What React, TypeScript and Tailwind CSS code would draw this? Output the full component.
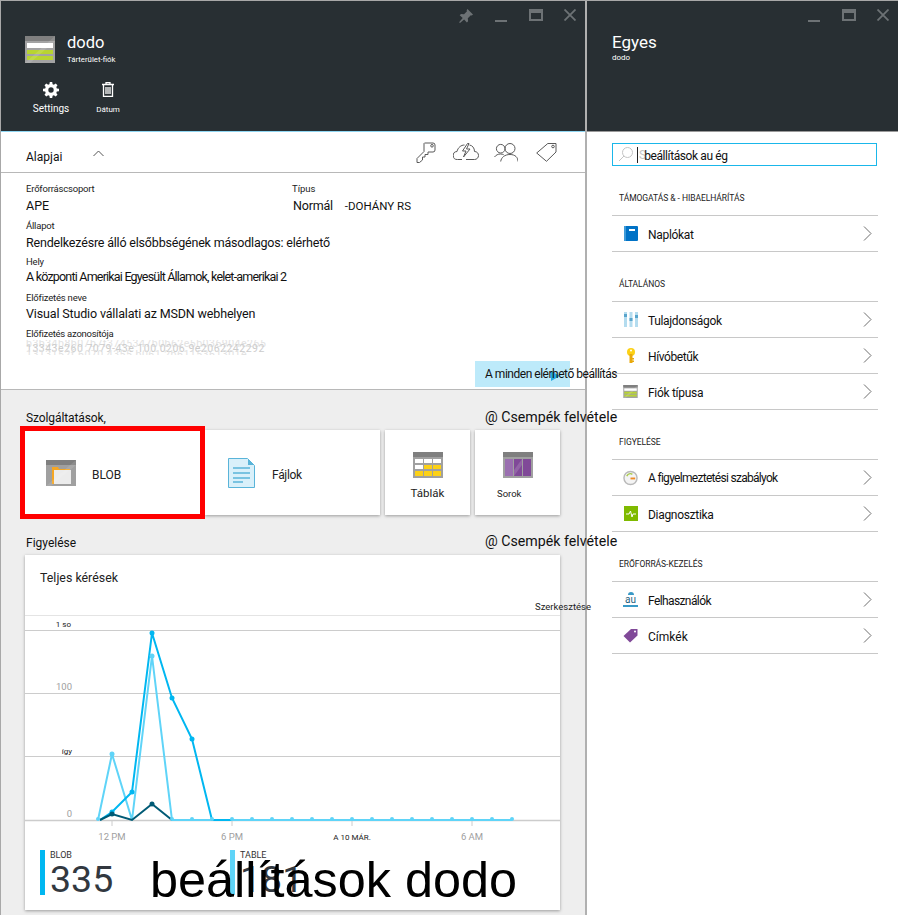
import React from 'react';

const WindowControls: React.FC<{ pin?: boolean }> = ({ pin }) => (
  <div className="flex h-[26px] items-start justify-end pt-[8px]">
    {pin && (
      <svg viewBox="0 0 16 16" className="mr-[21px] mt-[-1px] h-[16px] w-[16px] text-[#6d7275]" fill="currentColor">
        <path d="M9.5 1 15 6.5l-1.2 1-1-.3-3 3 .3 3-1.2 1.2-2.8-3L2 15l-.9-.8 3.6-4.2-3-2.8L3 6l3 .3 3-3-.4-1.1z" />
      </svg>
    )}
    <div className="mr-[22px] mt-[11px] h-[2px] w-[12px] bg-[#6d7275]" />
    <div className="mr-[21px] h-[12px] w-[14px] border-2 border-t-[4px] border-[#6d7275]" />
    <svg viewBox="0 0 12 12" className="mr-[9px] h-[12px] w-[12px] text-[#6d7275]" stroke="currentColor" strokeWidth="1.8">
      <path d="M0.5 0.5 11.5 11.5M11.5 0.5 0.5 11.5" />
    </svg>
  </div>
);

const StorageIcon: React.FC<{ className: string }> = ({ className }) => (
  <svg viewBox="0 0 30 27" className={className}>
    <rect width="30" height="27" fill="#a3a3a3" />
    <rect width="30" height="5" fill="#7f7f7f" />
    <rect x="2" y="7" width="26" height="5" fill="#ffffff" />
    <rect x="2" y="14" width="26" height="4" fill="#b8d432" />
    <rect x="2" y="20" width="26" height="4" fill="#b8d432" />
    <path d="M30 0v5L5 27H0z" fill="#ffffff" fillOpacity="0.12" />
  </svg>
);

const BlobIcon = () => (
  <svg viewBox="0 0 30 26" className="h-[26px] w-[30px]">
    <rect width="30" height="26" fill="#a0a0a0" />
    <rect width="30" height="5" fill="#7f7f7f" />
    <path d="M6 7h6l1 2h11v15H6z" fill="#f5a623" />
    <rect x="8" y="10" width="17" height="14" fill="#ececec" />
    <path d="M30 0v5L5 26H0z" fill="#ffffff" fillOpacity="0.1" />
  </svg>
);

const FileIcon = () => (
  <svg viewBox="0 0 27 30" className="h-[30px] w-[27px]">
    <path d="M0.5 0.5h19l7 7v22h-26z" fill="#d9f0fa" stroke="#59b4d9" />
    <path d="M20 1v6h6z" fill="#59b4d9" />
    <path d="M5 10h17M5 15h17M5 20h17M5 24h10" stroke="#59b4d9" strokeWidth="1.6" />
  </svg>
);

const TableIcon = () => (
  <svg viewBox="0 0 30 26" className="h-[26px] w-[30px]">
    <rect width="30" height="26" fill="#a0a0a0" />
    <rect width="30" height="5" fill="#7f7f7f" />
    <path d="M2 7h8v4H2zM11 7h8v4h-8zM20 7h8v4h-8zM2 13h8v4H2z" fill="#ffffff" />
    <path d="M11 13h8v4h-8zM20 13h8v4h-8zM2 19h8v5H2zM11 19h8v5h-8zM20 19h8v5h-8z" fill="#fcd116" />
  </svg>
);

const QueueIcon = () => (
  <svg viewBox="0 0 30 26" className="h-[26px] w-[30px]">
    <rect width="30" height="26" fill="#a0a0a0" />
    <rect width="30" height="5" fill="#7f7f7f" />
    <rect x="2" y="7" width="8" height="17" fill="#9a6fb0" />
    <rect x="11" y="7" width="8" height="17" fill="#804998" />
    <rect x="20" y="7" width="8" height="17" fill="#804998" />
    <path d="M19 7v6l-8 11v-6z" fill="#ffffff" fillOpacity="0.15" />
  </svg>
);

const BookIcon = () => (
  <svg viewBox="0 0 14 15" className="h-[15px] w-[14px]">
    <rect width="14" height="15" rx="1" fill="#0072c6" />
    <rect x="0" width="2" height="15" fill="#3e9ad8" />
    <rect x="5" y="3" width="6" height="2" fill="#ffffff" />
  </svg>
);

const SlidersIcon = () => (
  <svg viewBox="0 0 14 15" className="h-[15px] w-[14px]">
    <path d="M0 0h3v15H0zM5.5 0h3v15h-3zM11 0h3v15h-3z" fill="#b4dcef" />
    <path d="M0 2h3v3H0zM5.5 6h3v3h-3zM11 3h3v3h-3z" fill="#59a5cc" />
  </svg>
);

const GoldKeyIcon = () => (
  <svg viewBox="0 0 10 15" className="h-[15px] w-[10px]">
    <circle cx="5" cy="4" r="4" fill="#fcd116" />
    <path d="M3.5 6h3v9h-3z" fill="#e8a90c" />
    <path d="M6 10h2v1.5H6zM6 12.500h2V14H6z" fill="#e8a90c" />
    <circle cx="5" cy="2.500" r="1" fill="#ffffff" />
  </svg>
);

const GaugeIcon = () => (
  <svg viewBox="0 0 16 16" className="h-[16px] w-[16px]">
    <circle cx="8" cy="8" r="7" fill="#f4f4f4" stroke="#b9b9b9" strokeWidth="1.500" />
    <path d="M4 6a4.500 4.500 0 0 1 6-2" fill="none" stroke="#a8c94a" strokeWidth="1.500" />
    <path d="M8 8.500h5" stroke="#f08a24" strokeWidth="2" />
  </svg>
);

const DiagIcon = () => (
  <svg viewBox="0 0 14 15" className="h-[15px] w-[14px]">
    <rect width="14" height="15" fill="#7fba00" />
    <path d="M2 8h3l1.500-3 1.500 6 1-3h3" fill="none" stroke="#ffffff" strokeWidth="1" />
  </svg>
);

const UsersAuIcon = () => (
  <div className="flex h-[15px] w-[15px] flex-col items-center">
    <div className="h-[3px] w-[6px] rounded-t-full bg-[#3999c6]" />
    <div className="mt-[1px] text-[10px] leading-[8px] text-[#1f5f80]">au</div>
    <div className="mt-[1px] h-[1.500px] w-[15px] bg-[#3999c6]" />
  </div>
);

const TagIcon = () => (
  <svg viewBox="0 0 15 15" className="h-[15px] w-[15px]">
    <path d="M8 1h6.500v6.500L7 14.500 0.500 8z" fill="#804998" />
    <circle cx="12" cy="3.500" r="1" fill="#ffffff" />
  </svg>
);

const ToolKey = () => (
  <svg viewBox="0 0 20 21" className="h-[21px] w-[20px]" fill="none" stroke="#5a5a5a">
    <path d="M8.500 1H17q2 0 2 2v5q0 2-2 2h-5v2.500H9V15H6.500v3L3.500 20.500H1v-4l7-7V1.500z" />
    <circle cx="16" cy="3.800" r="1.300" />
  </svg>
);

const ToolCloud = () => (
  <svg viewBox="0 0 26 18" className="h-[18px] w-[26px]" fill="none" stroke="#5a5a5a">
    <path d="M9 16.500H4.500a4 4 0 0 1-.5-8C5 4.500 8 2 11.500 2M16.500 2c3 .5 5 3 5 6.500 2.500 0 4 1.800 4 4s-1.700 4-4 4H13" />
    <path d="M14.500 0.500 9.500 8h3.500l-2.500 6 6.500-8h-3.500l2.500-5.500z" />
  </svg>
);

const ToolUsers = () => (
  <svg viewBox="0 0 24 19" className="h-[19px] w-[24px]" fill="none" stroke="#5a5a5a">
    <circle cx="6.700" cy="5.700" r="4.300" />
    <circle cx="16" cy="5.500" r="5" />
    <path d="M0.500 14c1.500-2 3.500-3 6-3 1.200 0 2.300.3 3.200.7M6.700 18.500c.5-4 4-7 9.300-7s8 3 8 7" />
  </svg>
);

const ToolTag = () => (
  <svg viewBox="0 0 21 20" className="h-[20px] w-[21px]" fill="none" stroke="#5a5a5a">
    <path d="M0.700 11 11.800 1.500H20V10L10.500 19.300z" />
    <circle cx="17" cy="4.500" r="1.300" />
  </svg>
);

const Chevron = () => (
  <svg viewBox="0 0 9 15" className="h-[15px] w-[9px]" fill="none" stroke="#6f6f6f">
    <path d="M1 0.500 8 7.500 1 14.500" />
  </svg>
);

const SettingRow: React.FC<{ icon: React.ReactNode; label: string; labelClass: string }> = ({ icon, label, labelClass }) => (
  <div className="flex h-[36px] items-center border-b border-[#c8c8c8] pl-[11px] pr-[6px]">
    <div className="flex w-[15px] justify-center">{icon}</div>
    <div className={`flex-1 pl-[10px] text-[12px] text-[#111111] ${labelClass}`}>{label}</div>
    <Chevron />
  </div>
);

const SectionHead: React.FC<{ label: string }> = ({ label }) => (
  <div className="flex h-[50px] items-end border-b border-[#c8c8c8] pb-[12px] pl-[7px] text-[8.500px] leading-[10px] tracking-[-0.05px] text-[#222222]">
    {label}
  </div>
);

const Field: React.FC<{ label: string; value: string; className: string; valueClass: string }> = ({ label, value, className, valueClass }) => (
  <div className={className}>
    <div className="text-[9.500px] leading-[12px] tracking-[-0.2px] text-[#222222]">{label}</div>
    <div className={`text-[12.500px] text-[#111111] ${valueClass}`}>{value}</div>
  </div>
);

const blobPts = '100,820 112,812 132,792 152,633 172,698 192,739 212,820 232,820';
const tablePts = '98,820 112,754 132,820 152,656 172,820 512,820';
const darkPts = '100,820 112,814 132,820 152,804 172,820';
const zeroDots = [98, 172, 192, 212, 232, 252, 272, 292, 312, 332, 352, 372, 392, 412, 432, 452, 472, 492, 512];

const RequestChart = () => (
  <svg viewBox="25 610 535 235" className="mt-[24px] block h-[235px] w-[535px]">
    <path d="M25 615.500H560" stroke="#e4e4e4" />
    <path d="M25 630.500H560M25 693.500H560M25 756.500H560" stroke="#cccccc" />
    <path d="M25 820.500H560" stroke="#cccccc" strokeWidth="1.500" />
    <path d="M112 821v5M232 821v5M352 821v5M472 821v5" stroke="#cccccc" />
    <polyline points={tablePts} fill="none" stroke="#5fd4f8" strokeWidth="2" />
    <polyline points={blobPts} fill="none" stroke="#00b7f1" strokeWidth="2" />
    <polyline points={darkPts} fill="none" stroke="#005a75" strokeWidth="2" />
    {zeroDots.map((x) => (
      <circle key={x} cx={x} cy="819" r="2" fill="#5fd4f8" />
    ))}
    {[[112, 754], [152, 656]].map(([x, y]) => (
      <circle key={x} cx={x} cy={y} r="2.500" fill="#5fd4f8" />
    ))}
    {[[112, 812], [132, 792], [152, 633], [172, 698], [192, 739]].map(([x, y]) => (
      <circle key={x} cx={x} cy={y} r="2.500" fill="#00b7f1" />
    ))}
    {[[112, 814], [152, 804]].map(([x, y]) => (
      <circle key={x} cx={x} cy={y} r="2.500" fill="#005a75" />
    ))}
    <g fontSize="9.500" fill="#a0a0a0" textAnchor="end">
      <text x="71" y="627" fill="#222222" fontSize="8">1 so</text>
      <text x="72" y="690">100</text>
      <text x="72" y="754" fill="#222222" fontSize="8">így</text>
      <text x="72" y="817">0</text>
    </g>
    <g fontSize="9.500" fill="#a0a0a0" textAnchor="middle">
      <text x="112" y="840">12 PM</text>
      <text x="232" y="840">6 PM</text>
      <text x="352" y="840" fill="#222222" fontSize="8">A 10 MÁR.</text>
      <text x="472" y="840">6 AM</text>
    </g>
  </svg>
);

const Tile: React.FC<{ className: string; children: React.ReactNode }> = ({ className, children }) => (
  <div className={`bg-white shadow-[0_1px_3px_rgba(0,0,0,0.35)] ${className}`}>{children}</div>
);

export default function App() {
  return (
    <div
      className="relative flex h-[915px] w-[898px] overflow-hidden border-l border-t border-[#a8a8a8] bg-white"
      style={{ fontFamily: 'Roboto, "Noto Sans", sans-serif' }}
    >
      {/* left blade */}
      <div className="relative z-10 flex w-[584px] flex-col">
        <header className="h-[131px] border-b border-[#8fd6f2] bg-[#282f33] text-white">
          <WindowControls pin />
          <div className="flex pl-[24px] pt-[9px]">
            <StorageIcon className="h-[27px] w-[30px]" />
            <div className="pl-[12px]">
              <div className="mt-[-3px] text-[16.500px] leading-[20px]">dodo</div>
              <div className="mt-[1px] text-[7.800px] leading-[12px]">Tárterület-fiók</div>
            </div>
          </div>
          <div className="flex pl-[30px] pt-[16px]">
            <div className="flex w-[40px] flex-col items-center">
              <svg viewBox="0 0 16 16" className="h-[16px] w-[16px]" fill="#ffffff">
                <path fillRule="evenodd" d="M6.800 0h2.400l.4 2.200 1.300.5L12.700 1.500 14.500 3.300l-1.200 1.800.5 1.300 2.200.4v2.400l-2.200.4-.5 1.300 1.200 1.800-1.800 1.800-1.800-1.200-1.300.5-.4 2.200H6.800l-.4-2.200-1.300-.5-1.800 1.200-1.800-1.800 1.200-1.800-.5-1.300L0 9.200V6.800l2.200-.4.5-1.300-1.200-1.800 1.800-1.800 1.800 1.200 1.300-.5zM8 5.300a2.700 2.700 0 1 0 0 5.400 2.700 2.700 0 0 0 0-5.400z" />
              </svg>
              <div className="mt-[4px] text-[10px] leading-[14px]">Settings</div>
            </div>
            <div className="ml-[17px] flex w-[40px] flex-col items-center">
              <svg viewBox="0 0 12 15" className="h-[15px] w-[12px]" fill="none" stroke="#ffffff" strokeWidth="1.300">
                <path d="M0 2.500h12M4 2.500V.7h4v1.800M1.500 2.500V14.300h9V2.500M4 5v7M6 5v7M8 5v7" />
              </svg>
              <div className="mt-[6px] text-[8px] leading-[14px]">Dátum</div>
            </div>
          </div>
        </header>

        <div className="flex h-[41px] items-center border-b border-[#b8b8b8] pl-[25px] pr-[28px]">
          <span className="mt-[9px] text-[12px] text-[#111111]">Alapjai</span>
          <svg viewBox="0 0 11 7" className="mb-[-3px] ml-[31px] h-[7px] w-[11px]" fill="none" stroke="#555555">
            <path d="M0.500 6 5.500 1l5 5" />
          </svg>
          <div className="ml-auto flex items-center">
            <ToolKey />
            <div className="ml-[17px]"><ToolCloud /></div>
            <div className="ml-[15px]"><ToolUsers /></div>
            <div className="ml-[18px]"><ToolTag /></div>
          </div>
        </div>

        <div className="h-[217px] border-b border-[#b8b8b8] pl-[25px] pt-[10px]">
          <div className="flex">
            <Field label="Erőforráscsoport" value="APE" className="w-[266px]" valueClass="leading-[22px]" />
            <div>
              <div className="text-[9.500px] leading-[12px] text-[#222222]">Típus</div>
              <div className="pl-px text-[12.500px] leading-[22px] tracking-[-0.2px] text-[#111111]">
                Normál <span className="ml-[9px] text-[11.500px] tracking-normal">-DOHÁNY RS</span>
              </div>
            </div>
          </div>
          <Field label="Állapot" value="Rendelkezésre álló elsőbbségének másodlagos: elérhető" className="mt-[3px]" valueClass="leading-[22px] tracking-[-0.19px]" />
          <Field label="Hely" value="A központi Amerikai Egyesült Államok, kelet-amerikai 2" className="mt-[2px]" valueClass="leading-[18px] tracking-[-0.8px]" />
          <Field label="Előfizetés neve" value="Visual Studio vállalati az MSDN webhelyen" className="mt-[6px]" valueClass="leading-[20px] tracking-[-0.15px]" />
          <div className="mt-[4px] text-[9.500px] leading-[12px] tracking-[-0.25px] text-[#222222]">Előfizetés azonosítója</div>
          <div className="relative h-[15px] overflow-hidden text-[10.500px] leading-[14px] tracking-[0.5px] text-[#cccccc]">
            <div className="absolute top-[-3px] left-0 whitespace-nowrap text-[#e2e2e2]">b3b34b8b07b7f3745347b0b62e5b036904e265</div>
            <div className="absolute top-[2px] left-0 whitespace-nowrap">13343e260 7079-43e 100 0206 9e2062242292</div>
            <div className="absolute top-[8px] left-0 whitespace-nowrap text-[#e2e2e2]">1313152f 6070 4355 b061 2b6115361301e</div>
          </div>
          <div className="mt-[6px] flex justify-end pr-[15px]">
            <div className="relative flex h-[26px] w-[95px] items-center bg-[#bdeafa] pl-[10px] text-[12px] tracking-[-0.48px] whitespace-nowrap text-[#111111]">
              <div className="absolute left-[76px] top-[10px] h-0 w-0 border-y-[5px] border-l-[9px] border-y-transparent border-l-[#27a9e0]" />
              <span className="relative">A minden elérhető beállítás</span>
            </div>
          </div>
        </div>

        <div className="flex-1 bg-[#eeeeee] pl-[24px]">
          <div className="flex h-[40px] items-end justify-between pb-[4px]">
            <span className="pl-px text-[12px] leading-[16px] tracking-[-0.1px] text-[#111111]">Szolgáltatások,</span>
            <span className="mr-[-33px] w-[133px] text-[14.200px] leading-[18px] whitespace-nowrap text-[#111111]">@ Csempék felvétele</span>
          </div>
          <div className="flex gap-[5px]">
            <Tile className="relative flex h-[85px] w-[175px] items-center pl-[21px]">
              <BlobIcon />
              <span className="ml-[16px] pt-[4px] text-[12px] text-[#222222]">BLOB</span>
              <div className="absolute -inset-x-[5px] -inset-y-[4px] border-[5px] border-[#ff0000]" />
            </Tile>
            <Tile className="flex h-[85px] w-[175px] items-center pl-[23px]">
              <FileIcon />
              <span className="ml-[17px] pt-[4px] text-[12px] tracking-[-0.3px] text-[#222222]">Fájlok</span>
            </Tile>
            <Tile className="flex h-[85px] w-[85px] flex-col items-center pt-[22px]">
              <TableIcon />
              <span className="mt-[6px] text-[11.500px] leading-[18px] text-[#222222]">Táblák</span>
            </Tile>
            <Tile className="h-[85px] w-[85px] pt-[22px]">
              <div className="flex justify-center"><QueueIcon /></div>
              <div className="mt-[8px] pl-[22px] text-[9.500px] leading-[16px] text-[#222222]">Sorok</div>
            </Tile>
          </div>
          <div className="flex h-[40px] items-end justify-between pb-[4px]">
            <span className="pl-px text-[12px] leading-[16px] text-[#111111]">Figyelése</span>
            <span className="mr-[-33px] mb-[1px] w-[133px] text-[14.200px] leading-[18px] whitespace-nowrap text-[#111111]">@ Csempék felvétele</span>
          </div>
          <Tile className="relative h-[355px] w-[535px]">
            <div className="pl-[15px] pt-[15px] text-[12.400px] leading-[16px] text-[#222222]">Teljes kérések</div>
            <div className="absolute left-[510px] top-[46px] text-[9.500px] leading-[12px] whitespace-nowrap text-[#222222]">Szerkesztése</div>
            <RequestChart />
            <div className="flex pl-[15px] pt-[5px]">
              <div className="flex w-[190px]">
                <div className="h-[45px] w-[5px] bg-[#00b7f1]" />
                <div className="pl-[5px]">
                  <div className="text-[9px] leading-[10px] text-[#333333]">BLOB</div>
                  <div className="text-[37.500px] leading-[38px] text-[#32383f]">335</div>
                </div>
              </div>
              <div className="flex">
                <div className="h-[45px] w-[5px] bg-[#5fd4f8]" />
                <div className="pl-[5px]">
                  <div className="text-[9px] leading-[10px] text-[#333333]">TABLE</div>
                  <div className="text-[37.500px] leading-[38px] text-[#32383f]">181</div>
                </div>
              </div>
            </div>
          </Tile>
        </div>
      </div>

      <div className="w-[2px] bg-[#b0b0b0]" />

      {/* right blade */}
      <div className="flex flex-1 flex-col">
        <header className="h-[131px] border-b border-[#9a9a9a] bg-[#282f33] text-white">
          <WindowControls />
          <div className="pl-[25px] pt-[5px]">
            <div className="text-[17px] leading-[20px]">Egyes</div>
            <div className="mt-[1px] text-[8px] leading-[10px]">dodo</div>
          </div>
        </header>
        <div className="pl-[25px] pr-[20px]">
          <div className="mt-[11px] flex h-[23px] w-[265px] items-center border border-[#1ab7ea] pl-[5px] text-[12px] text-[#111111]">
            <svg viewBox="0 0 15 15" className="h-[15px] w-[15px]" fill="none" stroke="#c4c4c4">
              <circle cx="9.500" cy="5.500" r="5" />
              <path d="M6 9 1 14" />
            </svg>
            <div className="ml-[4px] h-[16px] w-px bg-[#222222]" />
            <span className="pl-px text-[#c4c4c4]">S</span>
            <span className="ml-[-2px] pt-[2px] tracking-[-0.4px]">beállítások au ég</span>
          </div>
          <SectionHead label="TÁMOGATÁS & - HIBAELHÁRÍTÁS" />
          <SettingRow icon={<BookIcon />} label="Naplókat" labelClass="pt-[3px] tracking-[-0.3px]" />
          <SectionHead label="ÁLTALÁNOS" />
          <SettingRow icon={<SlidersIcon />} label="Tulajdonságok" labelClass="pt-[3px] tracking-[-0.35px]" />
          <SettingRow icon={<GoldKeyIcon />} label="Hívóbetűk" labelClass="pt-[3px] tracking-[-0.4px]" />
          <SettingRow icon={<StorageIcon className="h-[13px] w-[15px]" />} label="Fiók típusa" labelClass="pt-[3px] tracking-[-0.3px]" />
          <SectionHead label="FIGYELÉSE" />
          <SettingRow icon={<GaugeIcon />} label="A figyelmeztetési szabályok" labelClass="tracking-[-0.7px]" />
          <SettingRow icon={<DiagIcon />} label="Diagnosztika" labelClass="pt-[3px] tracking-[-0.3px]" />
          <SectionHead label="ERŐFORRÁS-KEZELÉS" />
          <SettingRow icon={<UsersAuIcon />} label="Felhasználók" labelClass="pt-[3px] tracking-[-0.6px]" />
          <SettingRow icon={<TagIcon />} label="Címkék" labelClass="pt-[3px]" />
        </div>
      </div>

      {/* caption that sits over the whole page */}
      <div
        className="absolute left-[149px] top-[849px] z-20 text-[50.400px] leading-[60px] whitespace-nowrap text-black"
        style={{ fontFamily: '"Liberation Sans", sans-serif' }}
      >
        beállítások dodo
      </div>
    </div>
  );
}
